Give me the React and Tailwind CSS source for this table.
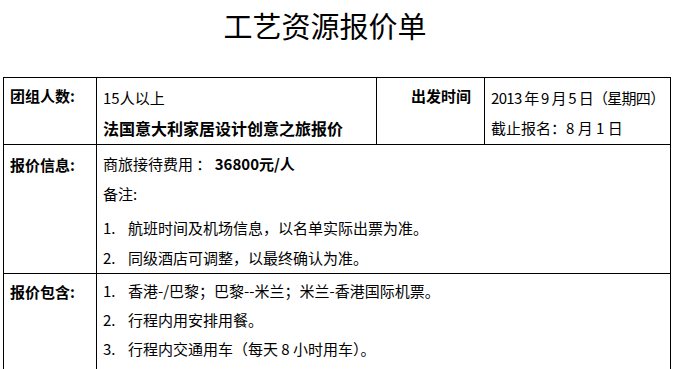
export default function App() {
  const notes = ["航班时间及机场信息，以名单实际出票为准。", "同级酒店可调整，以最终确认为准。"];
  const includes = [
    "香港-/巴黎；巴黎--米兰；米兰-香港国际机票。",
    "行程内用安排用餐。",
    "行程内交通用车（每天 8 小时用车）。",
  ];

  return (
    <div className="min-h-screen w-full bg-white text-black font-['Noto_Sans_CJK_SC',sans-serif]">
      {/* 标题 */}
      <div className="h-[77px] pt-[11px] pr-[23px] text-center text-[29px] leading-[29px]">工艺资源报价单</div>

      {/* 报价表 */}
      <div className="ml-[3px] grid w-[668px] grid-cols-[92px_279px_107px_185px] grid-rows-[66px_128px_auto] gap-px border border-black bg-black text-[15px]">
        {/* 第一行 */}
        <div className="bg-white pl-[6px] pt-[3px] font-bold leading-[30px]">团组人数:</div>
        <div className="bg-white pl-[6px] pt-[5px] leading-[30px]">
          <div>15人以上</div>
          <div className="text-[16px] font-bold">法国意大利家居设计创意之旅报价</div>
        </div>
        <div className="bg-white pr-[13px] pt-[3px] text-right font-bold leading-[30px]">出发时间</div>
        <div className="whitespace-nowrap bg-white pl-[6px] pt-[5px] leading-[30px]">
          <div className="tracking-[-0.7px]">2013 年 9 月 5 日（星期四）</div>
          <div>截止报名：8 月 1 日</div>
        </div>

        {/* 第二行 */}
        <div className="bg-white pl-[6px] pt-[5px] font-bold leading-[30px]">报价信息:</div>
        <div className="col-span-3 bg-white pl-[6px] pt-[4px] leading-[30px]">
          <div>
            商旅接待费用 ： <span className="font-bold">36800元/人</span>
          </div>
          <div>备注:</div>
          <div className="mt-[4px]">
            {notes.map((t, i) => (
              <div key={i} className="flex">
                <span className="w-[25px] shrink-0">{i + 1}.</span>
                <span>{t}</span>
              </div>
            ))}
          </div>
        </div>

        {/* 第三行 */}
        <div className="bg-white pl-[6px] pt-[3px] font-bold leading-[29px]">报价包含:</div>
        <div className="col-span-3 bg-white pb-[12px] pl-[6px] pt-[2px] leading-[29px]">
          {includes.map((t, i) => (
            <div key={i} className="flex">
              <span className="w-[25px] shrink-0">{i + 1}.</span>
              <span>{t}</span>
            </div>
          ))}
        </div>
      </div>
    </div>
  );
}
